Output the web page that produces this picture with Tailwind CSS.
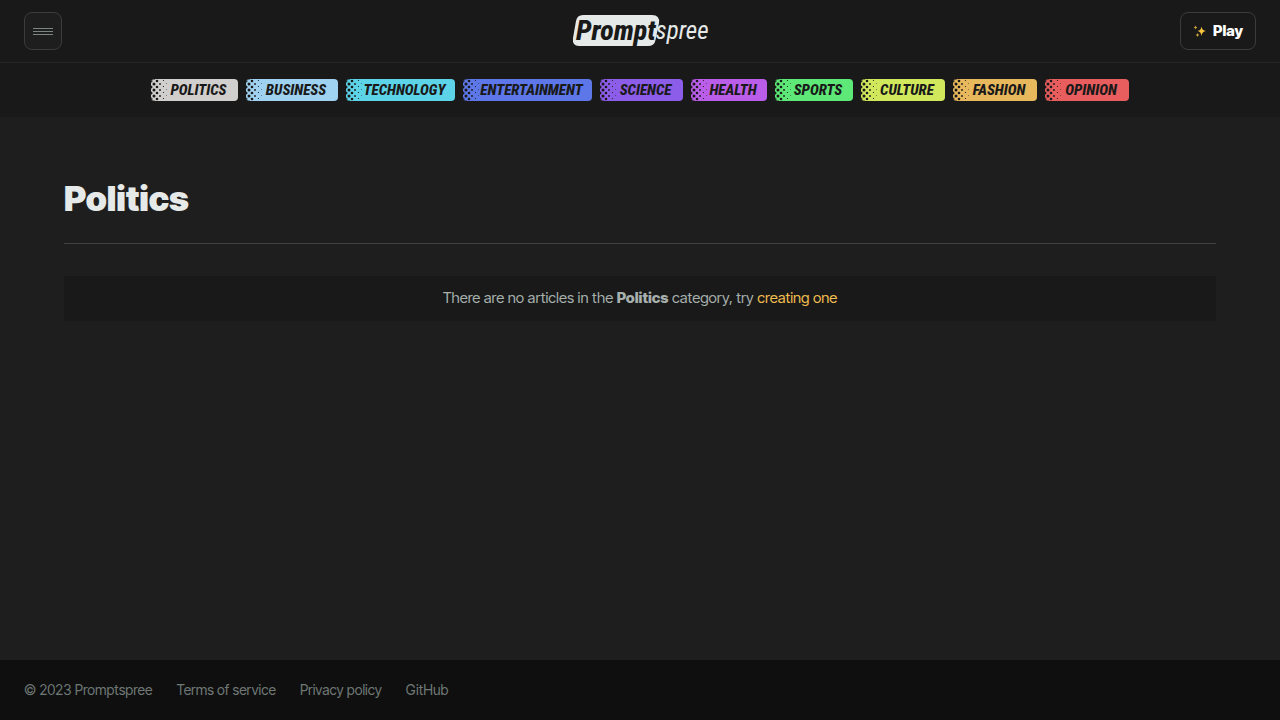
<!DOCTYPE html>
<html lang="en">
<head>
<meta charset="utf-8">
<meta name="viewport" content="width=device-width, initial-scale=1">
<title>Politics - Promptspree</title>
<script src="https://cdn.jsdelivr.net/npm/@tailwindcss/browser@4"></script>
</head>
<body class="flex min-h-screen flex-col bg-[#1e1e1e] font-['Inter_Tight','Inter','Liberation_Sans',sans-serif] text-[#a7b0ad]">
<svg class="hidden" aria-hidden="true">
  <symbol id="dots" viewBox="0 0 18 22">
    <g fill="#191919">
      <circle cx="0" cy="2" r="1.500"/><circle cx="0" cy="8" r="1.500"/><circle cx="0" cy="14" r="1.500"/><circle cx="0" cy="20" r="1.500"/>
      <circle cx="3" cy="-1" r="1.500"/><circle cx="3" cy="5" r="1.500"/><circle cx="3" cy="11" r="1.500"/><circle cx="3" cy="17" r="1.500"/><circle cx="3" cy="23" r="1.500"/>
      <circle cx="6" cy="2" r="1.300"/><circle cx="6" cy="8" r="1.300"/><circle cx="6" cy="14" r="1.300"/><circle cx="6" cy="20" r="1.300"/>
      <circle cx="9" cy="-1" r=".9"/><circle cx="9" cy="5" r=".9"/><circle cx="9" cy="11" r=".9"/><circle cx="9" cy="17" r=".9"/>
      <circle cx="12.500" cy="1.500" r=".6"/><circle cx="12.500" cy="7.500" r=".6"/><circle cx="12.500" cy="13.500" r=".6"/><circle cx="12.500" cy="19.500" r=".6"/>
      <circle cx="15.500" cy="4.500" r=".4"/><circle cx="15.500" cy="10.500" r=".4"/><circle cx="15.500" cy="16.500" r=".4"/>
    </g>
  </symbol>
</svg>
<header class="bg-[#191919]">
  <div class="flex items-center justify-between border-b border-[#262626] px-6 py-3">
    <div class="flex flex-1">
      <button type="button" aria-label="Menu" class="flex h-[38px] w-[38px] flex-col items-center justify-center gap-0.5 rounded-lg border border-[#3c3c3c] bg-[#1e1e1e]">
        <span class="h-px w-5 bg-[#7b8582]"></span><span class="h-px w-5 bg-[#7b8582]"></span><span class="h-px w-5 bg-[#7b8582]"></span>
      </button>
    </div>
    <a href="#" class="relative flex h-8 w-[136px] items-center pl-1 font-['Roboto_Condensed','Roboto',sans-serif] text-[28px] leading-8 italic">
      <svg class="absolute inset-0 h-8 w-[88px]" viewBox="0 0 88 32" aria-hidden="true"><path d="M11 0H80Q88 0 87 8L83.500 25Q82.500 31 76 31H7Q0 31 1 23L4 6Q5 0 11 0Z" fill="#e5e9e8"/></svg>
      <span class="relative w-[81px] font-extrabold text-[#191919]">Prompt</span><span class="relative text-[25px] text-[#e5e9e8]">spree</span>
    </a>
    <div class="flex flex-1 justify-end">
      <button type="button" class="flex h-[38px] w-[76px] items-center justify-center gap-1.5 rounded-lg border border-[#3c3c3c] text-[15px] font-extrabold text-white">
        <svg class="size-3.5" viewBox="0 0 14 14" aria-hidden="true"><g fill="#f9c440"><path d="M8.500 2.500Q9 6.500 13 7Q9 7.500 8.500 12Q8 7.500 4.500 7Q8 6.500 8.500 2.500Z"/><path opacity=".8" d="M2.500 1.500Q2.800 3.200 4.300 3.500Q2.800 3.800 2.500 5.500Q2.200 3.800 .7 3.500Q2.200 3.200 2.500 1.500Z"/><path opacity=".8" d="M4.500 9Q4.800 10.700 6.300 11Q4.800 11.300 4.500 13Q4.200 11.300 2.700 11Q4.200 10.700 4.500 9Z"/></g></svg>
        Play
      </button>
    </div>
  </div>
  <nav aria-label="Categories" class="flex flex-wrap justify-center gap-2 py-4 font-['Roboto_Condensed','Roboto',sans-serif] text-[15px] leading-[22px] font-extrabold text-[#191919] italic">
    <a href="#" class="relative w-[87px] overflow-hidden rounded bg-[#d1cfcd] pl-2 text-center"><svg class="absolute top-0 left-0 h-[22px] w-[18px]"><use href="#dots"/></svg>POLITICS</a>
    <a href="#" class="relative w-[92px] overflow-hidden rounded bg-[#9fd1f0] pl-2 text-center"><svg class="absolute top-0 left-0 h-[22px] w-[18px]"><use href="#dots"/></svg>BUSINESS</a>
    <a href="#" class="relative w-[109px] overflow-hidden rounded bg-[#5dd3e8] pl-2 text-center"><svg class="absolute top-0 left-0 h-[22px] w-[18px]"><use href="#dots"/></svg>TECHNOLOGY</a>
    <a href="#" class="relative w-[129px] overflow-hidden rounded bg-[#5d77e8] pl-2 text-center"><svg class="absolute top-0 left-0 h-[22px] w-[18px]"><use href="#dots"/></svg>ENTERTAINMENT</a>
    <a href="#" class="relative w-[83px] overflow-hidden rounded bg-[#8c5de8] pl-2 text-center"><svg class="absolute top-0 left-0 h-[22px] w-[18px]"><use href="#dots"/></svg>SCIENCE</a>
    <a href="#" class="relative w-[76px] overflow-hidden rounded bg-[#ba5de8] pl-2 text-center"><svg class="absolute top-0 left-0 h-[22px] w-[18px]"><use href="#dots"/></svg>HEALTH</a>
    <a href="#" class="relative w-[78px] overflow-hidden rounded bg-[#5de877] pl-2 text-center"><svg class="absolute top-0 left-0 h-[22px] w-[18px]"><use href="#dots"/></svg>SPORTS</a>
    <a href="#" class="relative w-[84px] overflow-hidden rounded bg-[#d1e85d] pl-2 text-center"><svg class="absolute top-0 left-0 h-[22px] w-[18px]"><use href="#dots"/></svg>CULTURE</a>
    <a href="#" class="relative w-[84px] overflow-hidden rounded bg-[#e8b85d] pl-2 text-center"><svg class="absolute top-0 left-0 h-[22px] w-[18px]"><use href="#dots"/></svg>FASHION</a>
    <a href="#" class="relative w-[84px] overflow-hidden rounded bg-[#e85d5d] pl-2 text-center"><svg class="absolute top-0 left-0 h-[22px] w-[18px]"><use href="#dots"/></svg>OPINION</a>
  </nav>
</header>
<main class="flex-1 px-16 pt-15">
  <h1 class="border-b border-[#414141] pb-6 text-[35px] leading-[42px] font-black text-[#e5e9e8]">Politics</h1>
  <p class="mt-8 bg-[#191919] pt-[11px] pb-[13px] text-center text-[15px] leading-[21px]">There are no articles in the <strong class="font-extrabold">Politics</strong> category, try <a href="#" class="text-[#f1be50]">creating one</a></p>
</main>
<footer class="flex h-15 items-center gap-6 bg-[#0f0f0f] px-6 text-sm text-[#6f7976]">
  <span>© 2023 Promptspree</span>
  <a href="#">Terms of service</a>
  <a href="#">Privacy policy</a>
  <a href="#">GitHub</a>
</footer>
</body>
</html>
